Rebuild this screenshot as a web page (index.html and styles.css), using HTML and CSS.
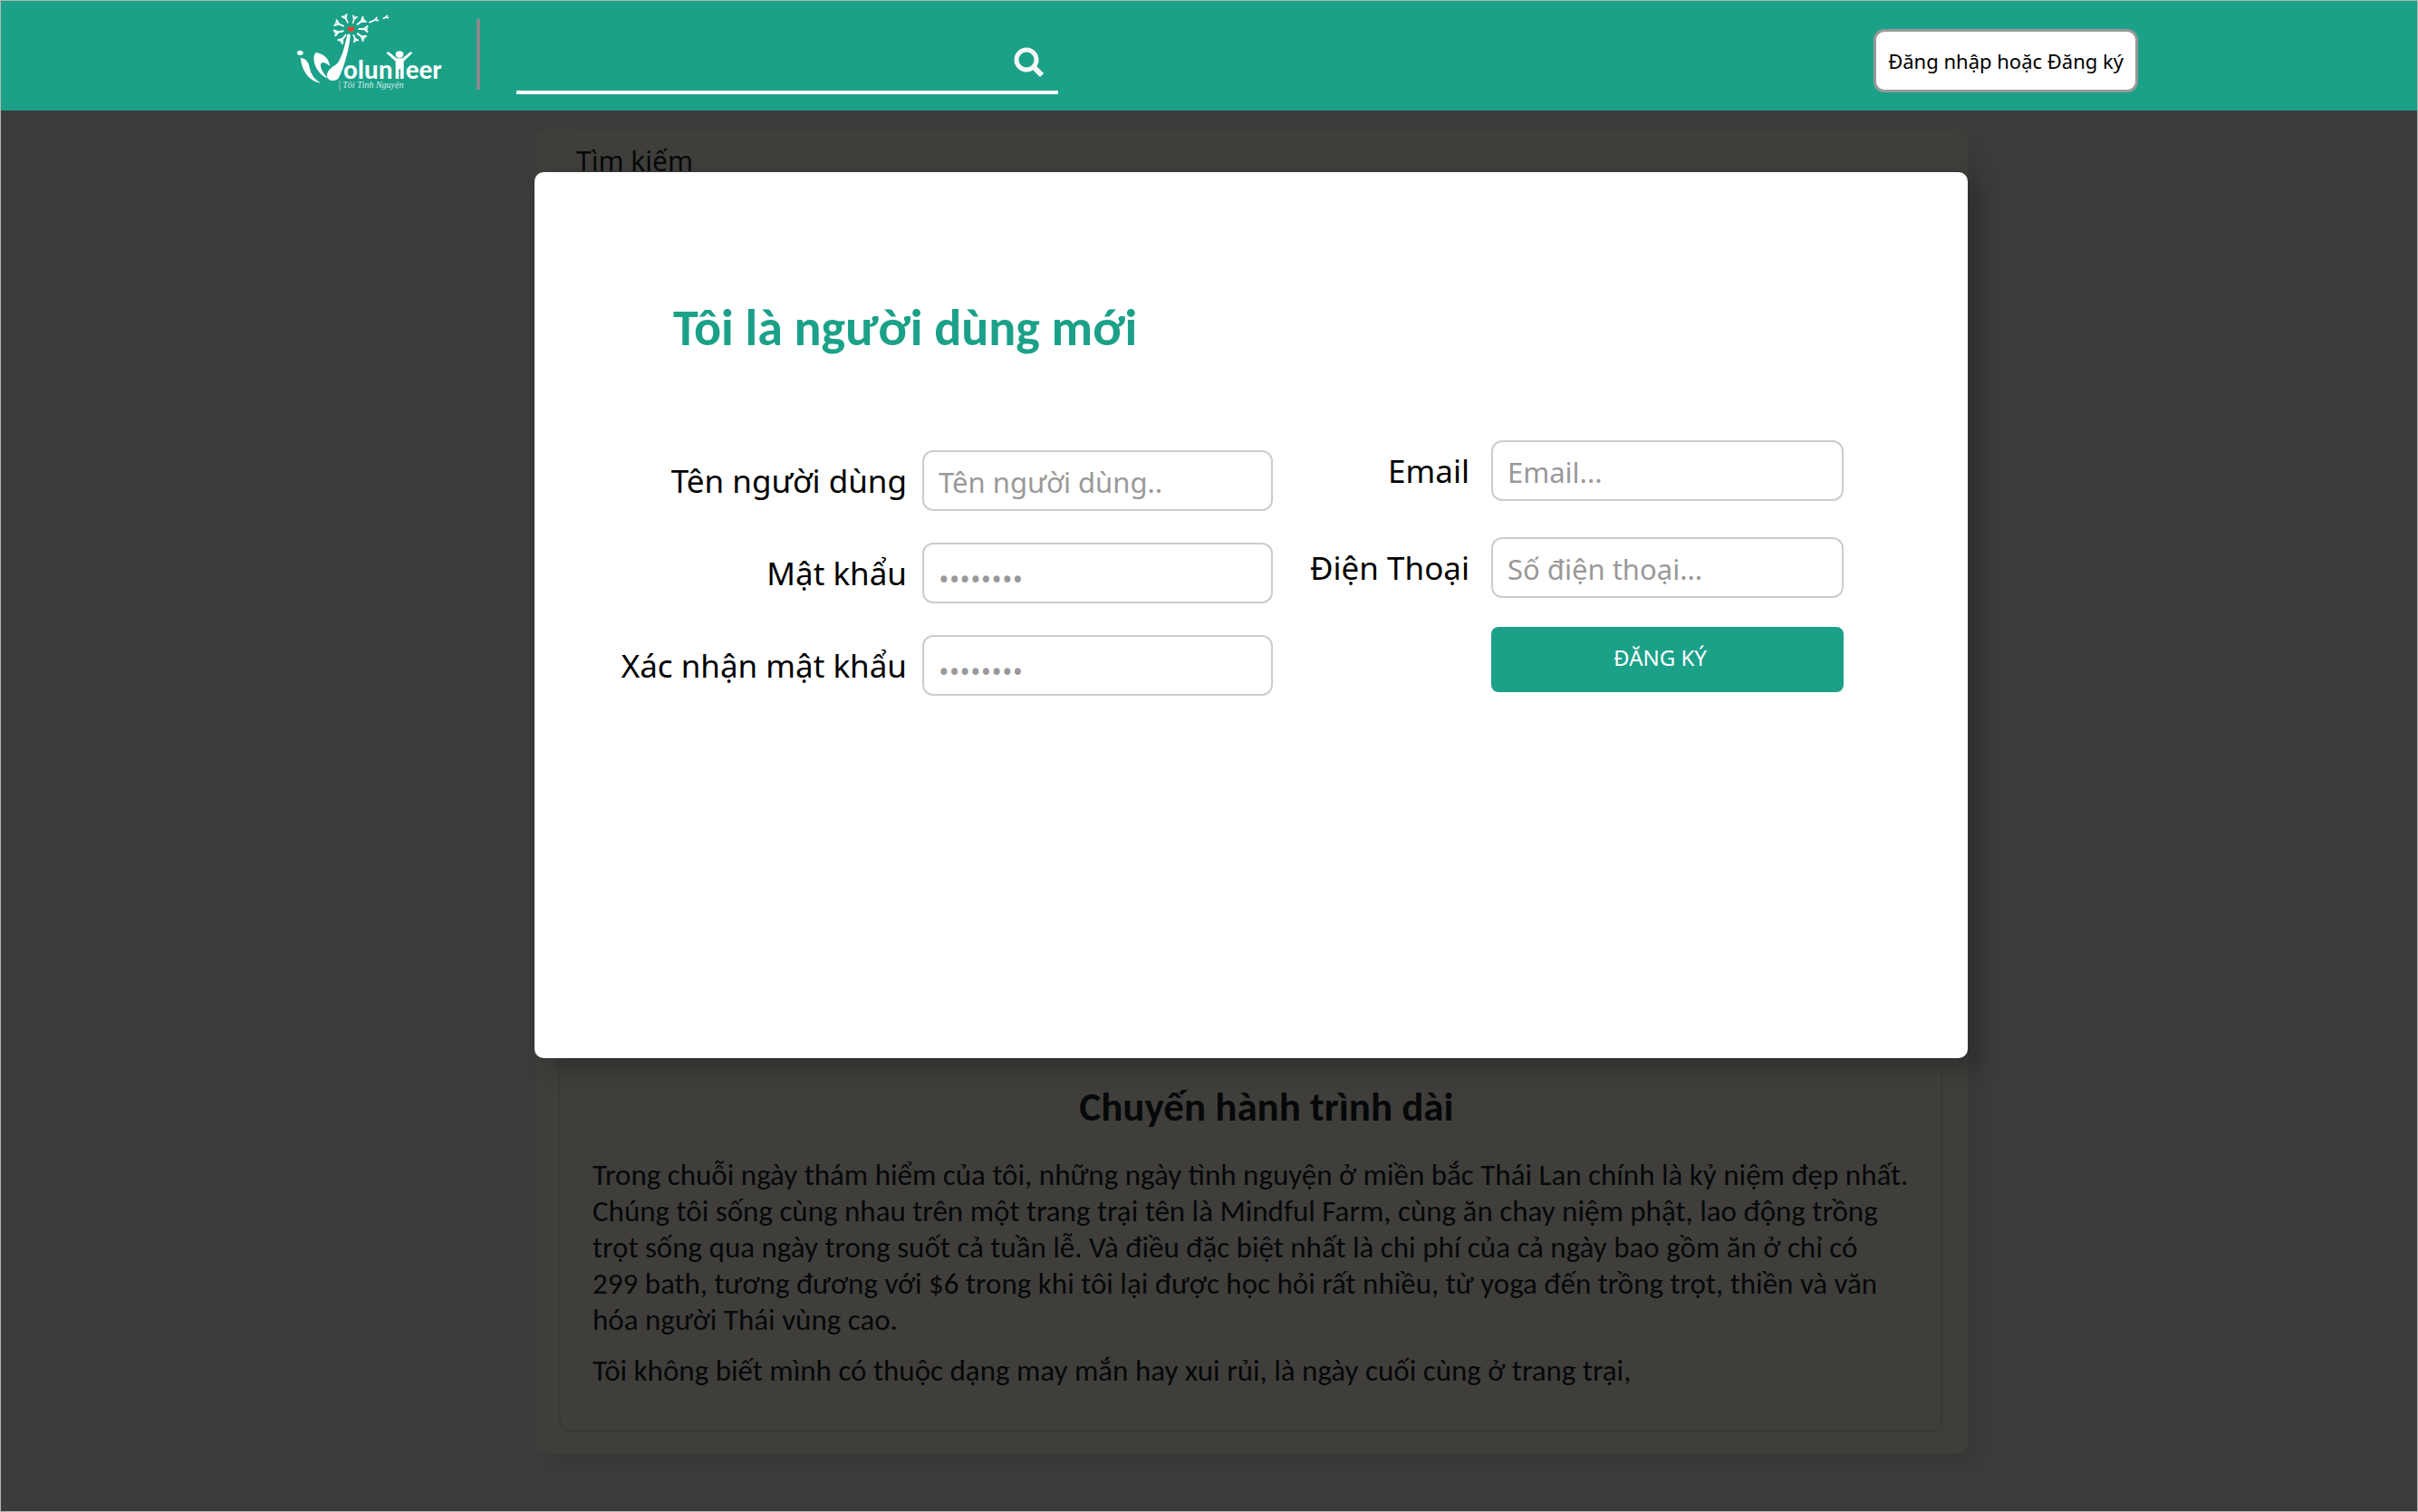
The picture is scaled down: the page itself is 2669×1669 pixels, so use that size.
FILE: index.html
```html
<!DOCTYPE html>
<html lang="vi">
<head>
<meta charset="utf-8">
<meta name="viewport" content="width=device-width, initial-scale=1">
<title>iVolunteer – Tôi Tình Nguyện</title>
<link rel="stylesheet" href="styles.css">
</head>
<body>
<header class="topbar">
  <a class="logo" href="#" aria-label="iVolunteer">
    <svg width="170" height="90" viewBox="0 0 170 90">
      <defs>
        <g id="seed" fill="none" stroke="#fff" stroke-width="6" stroke-linecap="round">
          <path d="M0 -27L0 -43M0 -43L-9 -55M0 -43L9 -55"/>
          <circle cx="0" cy="-52" r="3" stroke-width="3"/>
        </g>
      </defs>
      <g transform="translate(-15 -12) scale(.3333)">
        <g transform="translate(232 93)">
          <use href="#seed" transform="rotate(18) scale(.8)"/>
          <use href="#seed" transform="rotate(54)"/>
          <use href="#seed" transform="rotate(90)"/>
          <use href="#seed" transform="rotate(125)"/>
          <use href="#seed" transform="rotate(157) scale(.8)"/>
          <use href="#seed" transform="rotate(220)"/>
          <use href="#seed" transform="rotate(256)"/>
          <use href="#seed" transform="rotate(292)"/>
          <use href="#seed" transform="rotate(334) scale(.9)"/>
          <path d="M0 10C-9 6 -13 1 -11 -5C-9 -9 -3 -8 0 -4C3 -8 10 -9 11 -4C12 1 8 8 0 10Z" fill="#f0412c"/>
        </g>
        <g fill="none" stroke="#fff" stroke-width="5" stroke-linecap="round">
          <path d="M294 71L311 63L322 65M311 63L318 55"/>
          <path d="M340 58L348 54L355 56M348 54L352 49"/>
        </g>
        <g fill="#fff">
          <ellipse cx="64" cy="172" rx="10" ry="8"/>
          <path d="M65 189C82 190 91 200 95 220C100 247 114 262 133 272C97 267 70 237 65 189Z"/>
          <path d="M115 171C139 173 160 190 162 216C148 203 134 199 132 211C130 226 143 240 154 256C128 246 105 212 110 182Z"/>
          <path d="M220 111Q226 108 230 113C227 160 208 222 193 253C184 270 152 268 153 246C154 226 177 217 189 205C203 184 213 146 220 111Z"/>
          <ellipse cx="393" cy="177" rx="13" ry="11"/>
          <path d="M350 173Q353 166 359 170L383 190H403L427 170Q434 166 435 173L407 200V258H396V226H391V258H380V200Z"/>
        </g>
        <text class="logo-name" x="207" y="258">olun</text>
        <text class="logo-name" x="413" y="258">eer</text>
        <path d="M195 264V297" stroke="#8fb5aa" stroke-width="4"/>
        <text class="logo-tag" x="205" y="289">Tôi Tình Nguyện</text>
      </g>
    </svg>
  </a>
  <span class="divider"></span>
  <form class="search" role="search">
    <input class="search-input" type="search" aria-label="Tìm kiếm">
    <button class="search-button" type="button" aria-label="Tìm">
      <svg width="36" height="36" viewBox="0 0 36 36" fill="none" stroke="#f5f7f7">
        <circle cx="15" cy="15" r="11" stroke-width="5"/>
        <path d="M23 23L32 32" stroke-width="6"/>
      </svg>
    </button>
  </form>
  <button class="login" type="button">Đăng nhập hoặc Đăng ký</button>
</header>

<main class="page">
  <section class="panel">
    <h2 class="panel-title">Tìm kiếm</h2>
    <article class="story">
      <h3 class="story-title">Chuyến hành trình dài</h3>
      <p>Trong chuỗi ngày thám hiểm của tôi, những ngày tình nguyện ở miền bắc Thái Lan chính là kỷ niệm đẹp nhất.<br>Chúng tôi sống cùng nhau trên một trang trại tên là Mindful Farm, cùng ăn chay niệm phật, lao động trồng<br>trọt sống qua ngày trong suốt cả tuần lễ. Và điều đặc biệt nhất là chi phí của cả ngày bao gồm ăn ở chỉ có<br>299 bath, tương đương với $6 trong khi tôi lại được học hỏi rất nhiều, từ yoga đến trồng trọt, thiền và văn<br>hóa người Thái vùng cao.</p>
      <p>Tôi không biết mình có thuộc dạng may mắn hay xui rủi, là ngày cuối cùng ở trang trại,</p>
    </article>
  </section>

  <section class="modal" role="dialog" aria-labelledby="signup-title">
    <h1 class="modal-title" id="signup-title">Tôi là người dùng mới</h1>
    <form class="signup">
      <div class="fields fields-account">
        <label for="username">Tên người dùng</label>
        <input class="field" id="username" type="text" placeholder="Tên người dùng..">
        <label for="password">Mật khẩu</label>
        <input class="field field-password" id="password" type="password" placeholder="••••••••">
        <label for="confirm">Xác nhận mật khẩu</label>
        <input class="field field-password" id="confirm" type="password" placeholder="••••••••">
      </div>
      <div class="fields fields-contact">
        <label for="email">Email</label>
        <input class="field" id="email" type="email" placeholder="Email...">
        <label for="phone">Điện Thoại</label>
        <input class="field" id="phone" type="tel" placeholder="Số điện thoại...">
        <button class="submit" type="button">ĐĂNG KÝ</button>
      </div>
    </form>
  </section>
</main>
</body>
</html>
```
FILE: styles.css
```css
* {
  box-sizing: border-box;
}

body {
  margin: 0;
  min-height: 100vh;
  display: flex;
  flex-direction: column;
  border: 1px solid #b4b4b4;
  background: #3e3b3c;
  color: #000;
  font-family: "Noto Sans", "Open Sans", sans-serif;
}

h1, h2, h3, p {
  margin: 0;
}

input, button {
  font-family: inherit;
}

/* Top bar */
.topbar {
  display: flex;
  align-items: center;
  height: 121px;
  padding: 0 308px 0 324px;
  background: #1ca189;
}

.logo {
  display: block;
  height: 98px;
}

.logo svg {
  display: block;
}

.logo-name {
  fill: #fff;
  font: 700 88px Carlito, Lato, sans-serif;
}

.logo-tag {
  fill: #d8eee9;
  font: italic 30px "Liberation Serif", serif;
}

.divider {
  width: 4px;
  height: 78px;
  margin: 0 40px 4px 31px;
  background: #8a8a8a;
}

.search {
  display: flex;
  align-items: center;
  align-self: flex-end;
  flex: 0 1 598px;
  height: 66px;
  margin-bottom: 18px;
  padding-right: 14px;
  border-bottom: 4px solid #fff;
}

.search-input {
  flex: 1;
  min-width: 0;
  height: 56px;
  border: 0;
  outline: 0;
  background: transparent;
  color: #fff;
  font-size: 30px;
}

.search-button {
  height: 36px;
  padding: 0;
  border: 0;
  background: none;
}

.login {
  height: 70px;
  margin: 10px 0 0 auto;
  padding: 0 13px;
  border: 3px solid #999;
  border-radius: 12px;
  background: #fff;
  color: #000;
  font-size: 22px;
  white-space: nowrap;
}

/* Dimmed page behind the dialog */
.page {
  position: relative;
  flex: 1;
  padding: 21px 496px 64px 589px;
}

.panel {
  padding: 15px 28px 23px 27px;
  border-radius: 10px;
  background: #403e3b;
  box-shadow: 14px 14px 18px #393937;
  color: #060809;
}

.panel-title {
  padding-left: 19px;
  font-size: 30px;
  font-weight: 400;
  line-height: 40px;
}

.story {
  margin-top: 963px;
  padding: 32px 0 46px 35px;
  border: 2px solid #3a3936;
  border-radius: 12px;
  font: 33px/40px Carlito, Lato, sans-serif;
}

.story-title {
  margin-bottom: 28px;
  font-size: 45px;
  line-height: 54px;
  text-align: center;
}

.story p + p {
  margin-top: 16px;
}

/* Sign-up dialog */
.modal {
  position: absolute;
  top: 68px;
  left: 589px;
  right: 496px;
  padding: 140px 137px 400px 95px;
  border-radius: 10px;
  background: #fff;
  box-shadow: 14px 12px 20px rgba(36, 38, 38, 0.5);
}

.modal-title {
  margin-bottom: 92px;
  padding-left: 58px;
  color: #1ca189;
  font: 700 56px/64px Carlito, Lato, sans-serif;
}

.signup {
  display: grid;
  grid-template-columns: 8fr 7fr;
}

.fields {
  display: grid;
  align-content: start;
  align-items: center;
  font-size: 35px;
}

.fields label {
  text-align: right;
  white-space: nowrap;
}

.fields-account {
  grid-template-columns: 316px 1fr;
  gap: 35px 17px;
  padding-top: 11px;
}

.fields-contact {
  grid-template-columns: 217px 1fr;
  gap: 40px 24px;
}

.field {
  width: 100%;
  min-width: 0;
  height: 67px;
  padding: 2px 16px 0;
  border: 2px solid #ccc;
  border-radius: 12px;
  background: #fff;
  color: #000;
  font-size: 31px;
}

.field::placeholder {
  color: #999;
  opacity: 1;
}

.field-password {
  padding-top: 12px;
}

.submit {
  grid-column: 2;
  height: 72px;
  margin-top: -8px;
  padding: 0 16px 6px 0;
  border: 0;
  border-radius: 8px;
  background: #1ca189;
  color: #fff;
  font-size: 24px;
}
```
